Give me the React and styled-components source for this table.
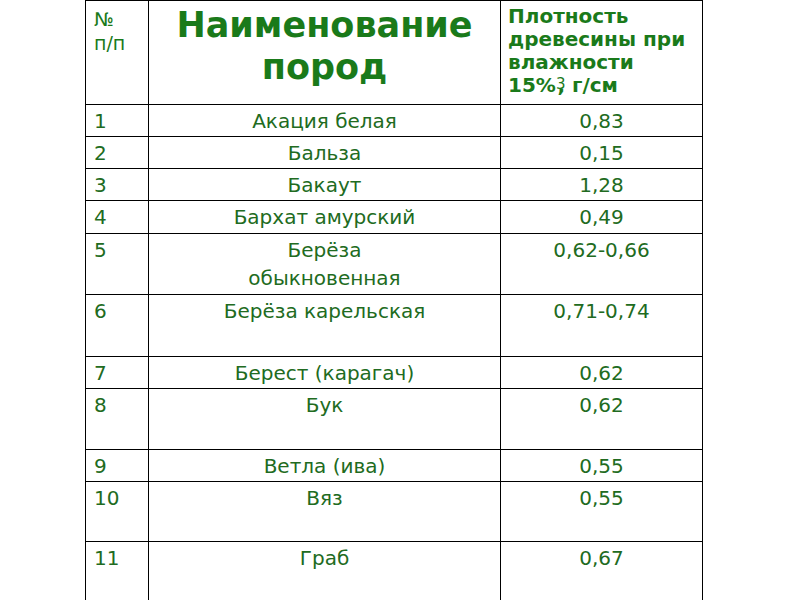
import React from "react";
import styled, { createGlobalStyle } from "styled-components";

const Global = createGlobalStyle`
  html, body {
    margin: 0;
    padding: 0;
    background: #fff;
  }
  body {
    font-family: "DejaVu Sans", Verdana, sans-serif;
  }
`;

const Page = styled.div`
  width: 800px;
  height: 600px;
  overflow: hidden;
  padding-left: 85px;
  box-sizing: border-box;
`;

const Table = styled.table`
  border-collapse: collapse;
  table-layout: fixed;
  width: 617px;
`;

const HeadCell = styled.th`
  border: 1px solid #000;
  vertical-align: top;
  text-align: ${(p) => p.$align || "left"};
  padding: ${(p) => p.$pad || "6px 8px"};
  color: #1a7a1a;
  font-weight: ${(p) => (p.$bold ? 700 : 400)};
  font-size: ${(p) => p.$size || "19px"};
  line-height: ${(p) => p.$lh || "24px"};
`;

const Row = styled.tr`
  height: ${(p) => p.$h}px;
`;

const Cell = styled.td`
  border: 1px solid #000;
  vertical-align: top;
  text-align: ${(p) => p.$align || "center"};
  padding: 2px 8px 0;
  color: #216b21;
  font-size: 20px;
  line-height: 28px;
`;

const NoWrap = styled.span`
  white-space: nowrap;
`;

const Sup = styled.span`
  display: inline-block;
  font-size: 15px;
  line-height: 0;
  margin-right: -8px;
  font-weight: 400;
  position: relative;
  top: -3px;
`;

const rows = [
  ["1", "Акация белая", "0,83", 32],
  ["2", "Бальза", "0,15", 32],
  ["3", "Бакаут", "1,28", 32],
  ["4", "Бархат амурский", "0,49", 33],
  ["5", "Берёза обыкновенная", "0,62-0,66", 61],
  ["6", "Берёза карельская", "0,71-0,74", 62],
  ["7", "Берест (карагач)", "0,62", 32],
  ["8", "Бук", "0,62", 61],
  ["9", "Ветла (ива)", "0,55", 32],
  ["10", "Вяз", "0,55", 60],
  ["11", "Граб", "0,67", 70],
];

export default function App() {
  return (
    <Page>
      <Global />
      <Table>
        <colgroup>
          <col style={{ width: 63 }} />
          <col style={{ width: 352 }} />
          <col style={{ width: 202 }} />
        </colgroup>
        <thead>
          <Row $h={104}>
            <HeadCell $pad="6px 8px">
              №<br />п/п
            </HeadCell>
            <HeadCell $bold $align="center" $size="35px" $lh="42px" $pad="3px 8px">
              Наименование пород
            </HeadCell>
            <HeadCell $bold $size="20px" $lh="23px" $pad="4px 7px">
              Плотность древесины при влажности
              <br />
              <NoWrap>
                15%<Sup>3</Sup>, г/см
              </NoWrap>
            </HeadCell>
          </Row>
        </thead>
        <tbody>
          {rows.map(([n, name, val, h]) => (
            <Row key={n} $h={h}>
              <Cell $align="left">{n}</Cell>
              <Cell>{name === "Берёза обыкновенная" ? (<>Берёза<br />обыкновенная</>) : name}</Cell>
              <Cell>{val}</Cell>
            </Row>
          ))}
        </tbody>
      </Table>
    </Page>
  );
}
